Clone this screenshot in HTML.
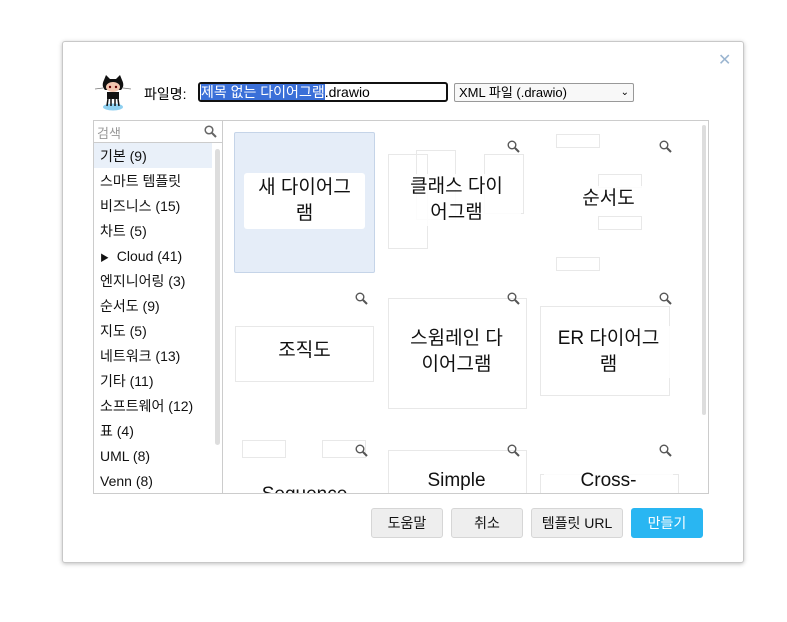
<!DOCTYPE html>
<html><head><meta charset="utf-8"><style>
*{box-sizing:border-box}
body{margin:0;width:787px;height:622px;background:#fff;font-family:"Liberation Sans","Noto Sans CJK KR",sans-serif;position:relative;overflow:hidden}
.dlg{position:absolute;left:62px;top:41px;width:682px;height:522px;border:1px solid #c8c8c8;border-radius:3px;box-shadow:0 1px 4px rgba(0,0,0,.25);background:#fff}
.x{position:absolute;left:718px;top:50px;color:#9bb5d0;font-size:16px}
.lbl{position:absolute;left:144px;top:84px;font-size:14px}
.fn{position:absolute;left:198px;top:82px;width:250px;height:20px;border:2px solid #111;border-radius:3px;font-size:14px;line-height:16px;padding-left:1px}
.fn span{background:#3a6fd8;color:#fff}
.sel{position:absolute;left:454px;top:83px;width:180px;height:19px;border:1px solid #999;border-radius:2px;font-size:13px;line-height:17px;padding-left:4px;background:#f8f8f8}
.side{position:absolute;left:93px;top:120px;width:130px;height:374px;border:1px solid #ccc;overflow:hidden}
.srch{height:22px;border-bottom:1px solid #ccc;font-size:13px;color:#999;padding:2px 3px}
.it{height:25px;line-height:26px;font-size:14px;padding-left:6px;color:#111;width:118px;white-space:nowrap}
.it.a{background:#e9f0f9}
.sb{position:absolute;left:121px;top:28px;width:5px;height:296px;background:#ddd;border-radius:3px}
.main{position:absolute;left:222px;top:120px;width:487px;height:374px;border:1px solid #ccc;border-left:none;overflow:hidden}
.msb{position:absolute;left:480px;top:4px;width:4px;height:290px;background:#ddd;border-radius:2px}
.t{position:absolute;width:141px;height:141px}
.t .lab{position:absolute;left:6px;right:6px;top:40px;text-align:center;font-size:19px;line-height:26px;color:#111;background:rgba(255,255,255,.85)}
.t.sel1{background:#e5edf8;border:1px solid #c5d4e8;border-radius:2px}
.t.sel1 .lab{left:9px;right:9px;top:40px;height:56px;background:#fff;border-radius:3px;padding-top:2px}
.g{position:absolute;border:1px solid #e8e8e8}
.btn{position:absolute;top:508px;height:30px;border:1px solid #d6d6d6;border-radius:3px;background:#eee;font-size:14px;text-align:center;line-height:28px;color:#111}
</style></head><body>
<div class="dlg"></div>
<div class="x">✕</div>
<svg style="position:absolute;left:93px;top:72px" width="40" height="40" viewBox="0 0 40 40">
<ellipse cx="20" cy="35" rx="10" ry="3.5" fill="#8fd0f0"/>
<path d="M11 8 L13 3 L17 7 L23 7 L27 3 L29 8 Q32 14 28 18 L12 18 Q8 14 11 8Z" fill="#111"/>
<ellipse cx="20" cy="15" rx="7" ry="5" fill="#f4c7b0"/>
<circle cx="17" cy="15" r="1.2" fill="#600"/><circle cx="23" cy="15" r="1.2" fill="#600"/>
<path d="M14 20 L26 20 L26 27 L14 27Z" fill="#111"/>
<path d="M15 27 L14 34 M18 27 L18 34 M22 27 L22 34 M25 27 L26 34" stroke="#111" stroke-width="1.5"/>
<path d="M2 17 L10 16 M30 16 L38 17" stroke="#777" stroke-width=".7"/>
</svg>
<div class="lbl">파일명:</div>
<div class="fn"><span>제목 없는 다이어그램</span>.drawio</div>
<div class="sel">XML 파일 (.drawio) <span style="position:absolute;right:4px;font-size:10px">⌄</span></div>
<div class="side">
<div class="srch">검색<svg style="position:absolute;left:110px;top:4px" width="13" height="13" viewBox="0 0 13 13"><circle cx="5" cy="5" r="3.8" fill="none" stroke="#666" stroke-width="1.5"/><path d="M8 8L12 12" stroke="#666" stroke-width="2"/></svg></div>
<div class="it a">기본 (9)</div><div class="it">스마트 템플릿</div><div class="it">비즈니스 (15)</div><div class="it">차트 (5)</div><div class="it"><span style="font-size:9px">▶</span>&nbsp; Cloud (41)</div><div class="it">엔지니어링 (3)</div><div class="it">순서도 (9)</div><div class="it">지도 (5)</div><div class="it">네트워크 (13)</div><div class="it">기타 (11)</div><div class="it">소프트웨어 (12)</div><div class="it">표 (4)</div><div class="it">UML (8)</div><div class="it">Venn (8)</div>
<div class="sb"></div>
</div>
<div class="main">
<div class="msb"></div>
</div>
<div class="t sel1" style="left:234px;top:132px"><div class="lab">새 다이어그<br>램</div></div>
<div class="t" style="left:386px;top:132px"><div class="g" style="left:2px;top:22px;width:40px;height:95px"></div><div class="g" style="left:30px;top:18px;width:40px;height:70px"></div><div class="g" style="left:98px;top:22px;width:40px;height:60px"></div><div class="lab" style="top:42px">클래스 다이<br>어그램</div></div>
<div class="t" style="left:538px;top:132px"><div class="g" style="left:18px;top:2px;width:44px;height:14px"></div><div class="g" style="left:60px;top:42px;width:44px;height:14px"></div><div class="g" style="left:60px;top:84px;width:44px;height:14px"></div><div class="g" style="left:18px;top:125px;width:44px;height:14px"></div><div class="lab" style="top:54px">순서도</div></div>
<div class="t" style="left:234px;top:284px"><div class="g" style="left:1px;top:42px;width:139px;height:56px"></div><div class="lab" style="top:54px;left:40px;right:40px">조직도</div></div>
<div class="t" style="left:386px;top:284px"><div class="g" style="left:2px;top:14px;width:139px;height:111px"></div><div class="lab" style="top:42px">스윔레인 다<br>이어그램</div></div>
<div class="t" style="left:538px;top:284px"><div class="g" style="left:2px;top:22px;width:130px;height:90px"></div><div class="lab" style="top:42px">ER 다이어그<br>램</div></div>
<div class="t" style="left:234px;top:436px;height:57px;overflow:hidden"><div class="g" style="left:8px;top:4px;width:44px;height:18px"></div><div class="g" style="left:88px;top:4px;width:44px;height:18px"></div><div class="lab" style="top:46px">Sequence</div></div>
<div class="t" style="left:386px;top:436px;height:57px;overflow:hidden"><div class="g" style="left:2px;top:14px;width:139px;height:60px"></div><div class="lab" style="top:32px">Simple</div></div>
<div class="t" style="left:538px;top:436px;height:57px;overflow:hidden"><div class="g" style="left:2px;top:38px;width:139px;height:40px"></div><div class="lab" style="top:32px">Cross-</div></div>
<svg width="0" height="0" style="position:absolute"><defs><g id="m"><circle cx="5" cy="5" r="3.8" fill="none" stroke="#555" stroke-width="1.4"/><path d="M8 8L12 12" stroke="#555" stroke-width="2"/></g></defs></svg>
<svg style="position:absolute;left:507px;top:140px" width="13" height="13"><use href="#m"/></svg>
<svg style="position:absolute;left:659px;top:140px" width="13" height="13"><use href="#m"/></svg>
<svg style="position:absolute;left:355px;top:292px" width="13" height="13"><use href="#m"/></svg>
<svg style="position:absolute;left:507px;top:292px" width="13" height="13"><use href="#m"/></svg>
<svg style="position:absolute;left:659px;top:292px" width="13" height="13"><use href="#m"/></svg>
<svg style="position:absolute;left:355px;top:444px" width="13" height="13"><use href="#m"/></svg>
<svg style="position:absolute;left:507px;top:444px" width="13" height="13"><use href="#m"/></svg>
<svg style="position:absolute;left:659px;top:444px" width="13" height="13"><use href="#m"/></svg>
<div class="btn" style="left:371px;width:72px">도움말</div>
<div class="btn" style="left:451px;width:72px">취소</div>
<div class="btn" style="left:531px;width:92px">템플릿 URL</div>
<div class="btn" style="left:631px;width:72px;background:#29b6f2;border-color:#29b6f2;color:#fff">만들기</div>
</body></html>
